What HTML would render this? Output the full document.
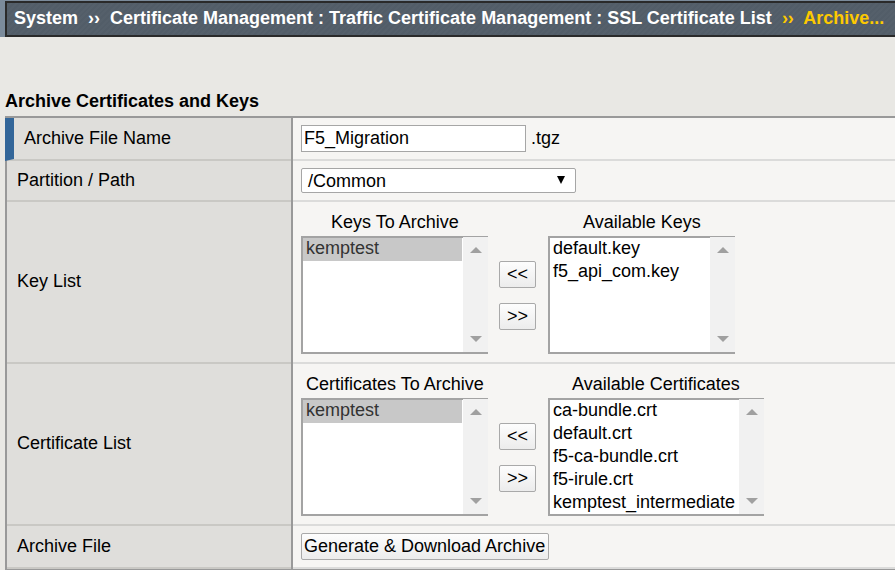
<!DOCTYPE html>
<html><head><meta charset="utf-8">
<style>
html,body{margin:0;padding:0;}
body{width:895px;height:570px;overflow:hidden;position:relative;background:#e9e8e4;font-family:"Liberation Sans",sans-serif;font-size:18px;color:#000;}
.a{position:absolute;}
.t{position:absolute;white-space:nowrap;line-height:22px;}
#hdrbg{left:0;top:0;width:895px;height:37px;background:#7b8b9b;}
#hdr{left:5px;top:1px;width:900px;height:36px;box-sizing:border-box;border:2px solid #2a2a2a;
 background:#535e69;
 background-image:repeating-linear-gradient(-45deg,rgba(255,255,255,0.012) 0 2px,rgba(0,0,0,0.012) 2px 4px);}
.hx{font-weight:bold;color:#fff;}
.hy{font-weight:bold;color:#fdc900;}
.lab{background:#dfdedb;}
.val{background:#f6f5f3;}
.sepL{background:#c9c8c4;}
.sepR{background:#dbdbda;}
.gb{background:#999;}
.inp{background:#fff;border:1px solid #a6a6a6;box-sizing:border-box;}
.lb{background:#fff;box-sizing:border-box;border-top:2px solid #a3a3a3;border-left:2px solid #a3a3a3;border-bottom:2px solid #a3a3a3;}
.sb{background:#f1f1f1;}
.btn{box-sizing:border-box;border:1px solid #a9a9a9;border-radius:2px;background:linear-gradient(#fdfdfd,#ececec);}
.up{width:0;height:0;border-left:6px solid transparent;border-right:6px solid transparent;border-bottom:6.5px solid #a0a0a0;}
.dn{width:0;height:0;border-left:6px solid transparent;border-right:6px solid transparent;border-top:6.5px solid #a0a0a0;}
</style></head><body>
<div class="a" id="hdrbg"></div>
<div class="a" id="hdr"></div>
<div class="t hx" style="left:14px;top:7px;">System &nbsp;››&nbsp; Certificate Management : Traffic Certificate Management : SSL Certificate List <span class="hy">&nbsp;››&nbsp; Archive...</span></div>

<div class="t" style="left:5px;top:90px;font-weight:bold;">Archive Certificates and Keys</div>

<!-- table frame -->
<div class="a gb" style="left:5px;top:116px;width:890px;height:2px;"></div>
<div class="a gb" style="left:5px;top:116px;width:2px;height:454px;"></div>
<div class="a gb" style="left:291px;top:116px;width:2px;height:454px;"></div>
<div class="a lab" style="left:7px;top:118px;width:284px;height:451px;"></div>
<div class="a val" style="left:293px;top:118px;width:602px;height:451px;"></div>
<div class="a gb" style="left:5px;top:569px;width:890px;height:1px;"></div>

<!-- separators -->
<div class="a sepL" style="left:7px;top:159px;width:284px;height:2px;"></div>
<div class="a sepR" style="left:293px;top:159px;width:602px;height:2px;"></div>
<div class="a sepL" style="left:7px;top:200px;width:284px;height:2px;"></div>
<div class="a sepR" style="left:293px;top:200px;width:602px;height:2px;"></div>
<div class="a sepL" style="left:7px;top:362px;width:284px;height:2px;"></div>
<div class="a sepR" style="left:293px;top:362px;width:602px;height:2px;"></div>
<div class="a sepL" style="left:7px;top:524px;width:284px;height:2px;"></div>
<div class="a sepR" style="left:293px;top:524px;width:602px;height:2px;"></div>
<div class="a sepL" style="left:7px;top:567px;width:284px;height:2px;"></div>
<div class="a sepR" style="left:293px;top:567px;width:602px;height:2px;"></div>

<!-- blue bar -->
<div class="a" style="left:5px;top:118px;width:9px;height:43px;background:#336699;clip-path:polygon(0 0,100% 0,100% 41px,0 100%);"></div>

<!-- labels -->
<div class="t" style="left:24px;top:127px;">Archive File Name</div>
<div class="t" style="left:17px;top:169px;">Partition / Path</div>
<div class="t" style="left:17px;top:270px;">Key List</div>
<div class="t" style="left:17px;top:432px;">Certificate List</div>
<div class="t" style="left:17px;top:535px;">Archive File</div>

<!-- row 1 -->
<div class="a inp" style="left:301px;top:125px;width:225px;height:27px;"></div>
<div class="t" style="left:304px;top:127px;">F5_Migration</div>
<div class="t" style="left:531px;top:127px;">.tgz</div>

<!-- row 2 -->
<div class="a inp" style="left:301px;top:168px;width:275px;height:25px;border-radius:2px;"></div>
<div class="t" style="left:308px;top:170px;">/Common</div>
<div class="a" style="left:557px;top:176px;width:0;height:0;border-left:4.5px solid transparent;border-right:4.5px solid transparent;border-top:8.5px solid #000;"></div>

<!-- row 3 keys -->
<div class="t" style="left:331px;top:211px;">Keys To Archive</div>
<div class="t" style="left:583px;top:211px;">Available Keys</div>
<div class="a lb" style="left:301px;top:236px;width:187px;height:118px;"></div>
<div class="a" style="left:303px;top:238px;width:159px;height:23px;background:#c8c8c8;"></div>
<div class="t" style="left:306px;top:237px;color:#333;">kemptest</div>
<div class="a sb" style="left:463px;top:237px;width:25px;height:115px;"></div>
<div class="a up" style="left:469.5px;top:247px;"></div>
<div class="a dn" style="left:469.5px;top:336px;"></div>

<div class="a btn" style="left:499px;top:261px;width:37px;height:27px;"></div>
<div class="t" style="left:507px;top:263px;">&lt;&lt;</div>
<div class="a btn" style="left:499px;top:303px;width:37px;height:27px;"></div>
<div class="t" style="left:507px;top:305px;">&gt;&gt;</div>

<div class="a lb" style="left:548px;top:236px;width:187px;height:118px;"></div>
<div class="t" style="left:553px;top:237px;">default.key</div>
<div class="t" style="left:553px;top:260px;">f5_api_com.key</div>
<div class="a sb" style="left:710px;top:237px;width:25px;height:115px;"></div>
<div class="a up" style="left:716.5px;top:247px;"></div>
<div class="a dn" style="left:716.5px;top:336px;"></div>

<!-- row 4 certs -->
<div class="t" style="left:306px;top:373px;">Certificates To Archive</div>
<div class="t" style="left:572px;top:373px;">Available Certificates</div>
<div class="a lb" style="left:301px;top:398px;width:187px;height:118px;"></div>
<div class="a" style="left:303px;top:400px;width:159px;height:23px;background:#c8c8c8;"></div>
<div class="t" style="left:306px;top:399px;color:#333;">kemptest</div>
<div class="a sb" style="left:463px;top:399px;width:25px;height:115px;"></div>
<div class="a up" style="left:469.5px;top:409px;"></div>
<div class="a dn" style="left:469.5px;top:498px;"></div>

<div class="a btn" style="left:499px;top:423px;width:37px;height:27px;"></div>
<div class="t" style="left:507px;top:425px;">&lt;&lt;</div>
<div class="a btn" style="left:499px;top:465px;width:37px;height:27px;"></div>
<div class="t" style="left:507px;top:467px;">&gt;&gt;</div>

<div class="a lb" style="left:548px;top:398px;width:216px;height:118px;"></div>
<div class="t" style="left:553px;top:399px;">ca-bundle.crt</div>
<div class="t" style="left:553px;top:422px;">default.crt</div>
<div class="t" style="left:553px;top:445px;">f5-ca-bundle.crt</div>
<div class="t" style="left:553px;top:468px;">f5-irule.crt</div>
<div class="t" style="left:553px;top:491px;">kemptest_intermediate</div>
<div class="a sb" style="left:739px;top:399px;width:25px;height:115px;"></div>
<div class="a up" style="left:745.5px;top:409px;"></div>
<div class="a dn" style="left:745.5px;top:498px;"></div>

<!-- row 5 -->
<div class="a btn" style="left:301px;top:533px;width:248px;height:27px;"></div>
<div class="t" style="left:304px;top:535px;">Generate &amp; Download Archive</div>
</body></html>
